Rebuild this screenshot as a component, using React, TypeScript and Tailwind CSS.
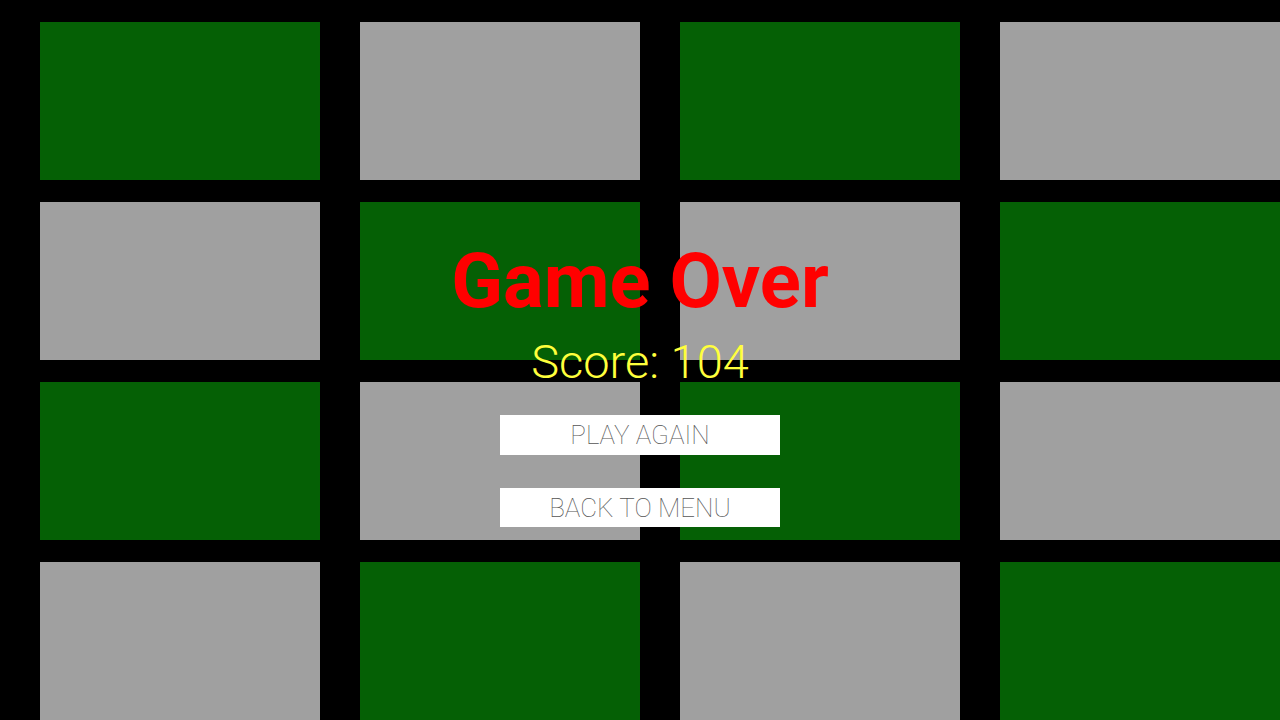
import React from "react";

const pattern = [
  ["g", "s", "g", "s"],
  ["s", "g", "s", "g"],
  ["g", "s", "g", "s"],
  ["s", "g", "s", "g"],
];

export default function App() {
  return (
    <div className="relative w-[1280px] h-[720px] overflow-hidden bg-black" style={{ fontFamily: "Roboto, 'Noto Sans', sans-serif" }}>
      <div className="grid grid-cols-[280px_280px_280px_280px] grid-rows-[158px_158px_158px_158px] gap-x-[40px] gap-y-[22px] pl-[40px] pt-[22px]">
        {pattern.flat().map((c, i) => (
          <div key={i} className={c === "g" ? "bg-[#056005]" : "bg-[#a0a0a0]"} />
        ))}
      </div>
      <div className="absolute left-0 right-0 top-[243px] flex flex-col items-center">
        <div className="text-[76px] leading-none font-bold text-[#ff0000]">Game Over</div>
        <div className="mt-[19px] text-[47px] leading-none font-light text-[#ffff3c]">Score: 104</div>
        <button className="mt-[30px] w-[280px] h-[40px] bg-white text-[26px] font-thin text-[#555555] flex items-center justify-center pt-[1px]">PLAY AGAIN</button>
        <button className="mt-[33px] w-[280px] h-[39px] bg-white text-[26px] font-thin text-[#555555] flex items-center justify-center pt-[1px]">BACK TO MENU</button>
      </div>
    </div>
  );
}
